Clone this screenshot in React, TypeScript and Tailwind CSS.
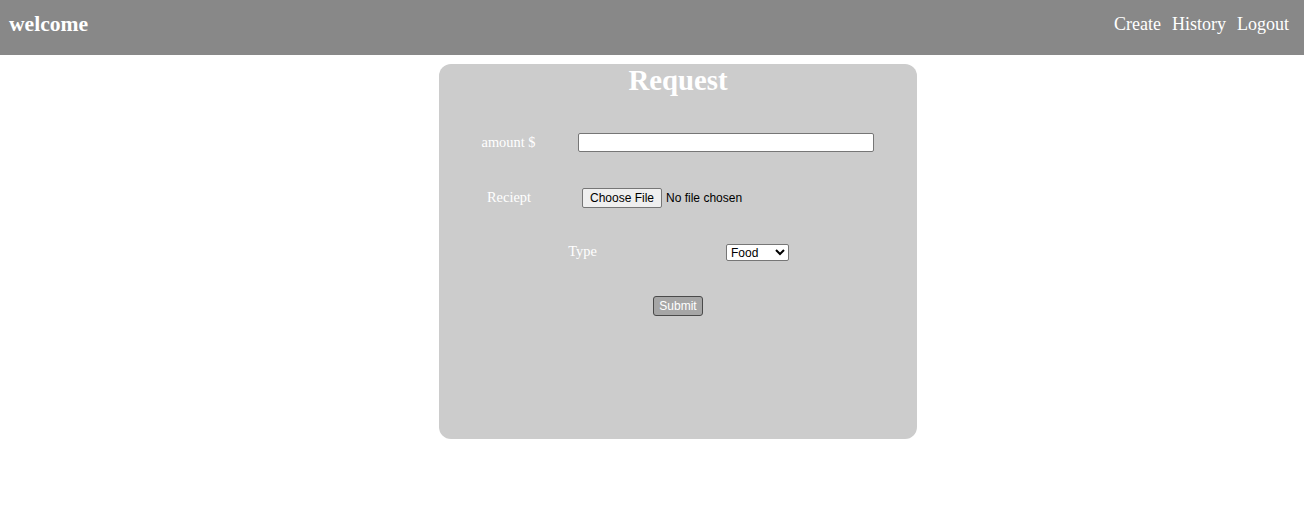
import React from "react";

export default function App() {
  const serif = { fontFamily: '"Liberation Serif", "Times New Roman", serif' };
  return (
    <div className="min-h-[522px] w-full bg-white" style={serif}>
      <header className="h-[55px] bg-[#888888] flex items-start justify-between pt-[12px] pl-[9px] pr-[15px] text-white">
        <div className="font-['Liberation_Serif',serif] font-bold text-[21.6px] leading-[24px]">welcome</div>
        <nav className="flex gap-[11px] text-[18px] leading-[21px] pt-[2px] font-['Liberation_Serif',serif]">
          <a href="#">Create</a>
          <a href="#">History</a>
          <a href="#">Logout</a>
        </nav>
      </header>
      <div className="flex justify-center pt-[9px] pl-[52px]">
        <div className="w-[478px] h-[375px] bg-[#cccccc] rounded-[12px] flex flex-col font-['Liberation_Serif',serif]">
          <h1 className="text-center text-white font-bold text-[28.8px] leading-[33px] h-[33px]">Request</h1>
          <div className="mt-[18px] flex flex-col">
            <div className="h-[55px] flex items-center">
              <label className="w-[139px] text-center text-white text-[14.4px]">amount $</label>
              <input
                type="text"
                className="w-[296px] h-[19px] bg-white border border-[#767676] rounded-[2px] text-[12px] font-['Liberation_Sans',Arial,sans-serif] px-[2px]"
              />
            </div>
            <div className="h-[55px] flex items-center">
              <label className="w-[140px] text-center text-white text-[14.4px]">Reciept</label>
              <input
                type="file"
                className="ml-[3px] text-[12px] text-black font-['Liberation_Sans',Arial,sans-serif] file:bg-[#efefef] file:border file:border-[#767676] file:rounded-[2px] file:px-[7px] file:py-[2px] file:mr-[4px] file:text-black file:leading-[14px]"
              />
            </div>
            <div className="h-[54px] flex items-center">
              <label className="w-[287px] text-center text-white text-[14.4px]">Type</label>
              <select className="w-[63px] h-[17px] bg-white border border-[#767676] rounded-[2px] text-black text-[12px] leading-[14px] font-['Liberation_Sans',Arial,sans-serif]">
                <option>Food</option>
                <option>Travel</option>
                <option>Other</option>
              </select>
            </div>
            <div className="h-[53px] flex items-center justify-center">
              <button className="bg-[#a6a6a6] text-white border border-[#4a4a4a] rounded-[3px] px-[5px] h-[20px] text-[12px] leading-[14px] font-['Liberation_Sans',Arial,sans-serif]">
                Submit
              </button>
            </div>
          </div>
        </div>
      </div>
    </div>
  );
}
